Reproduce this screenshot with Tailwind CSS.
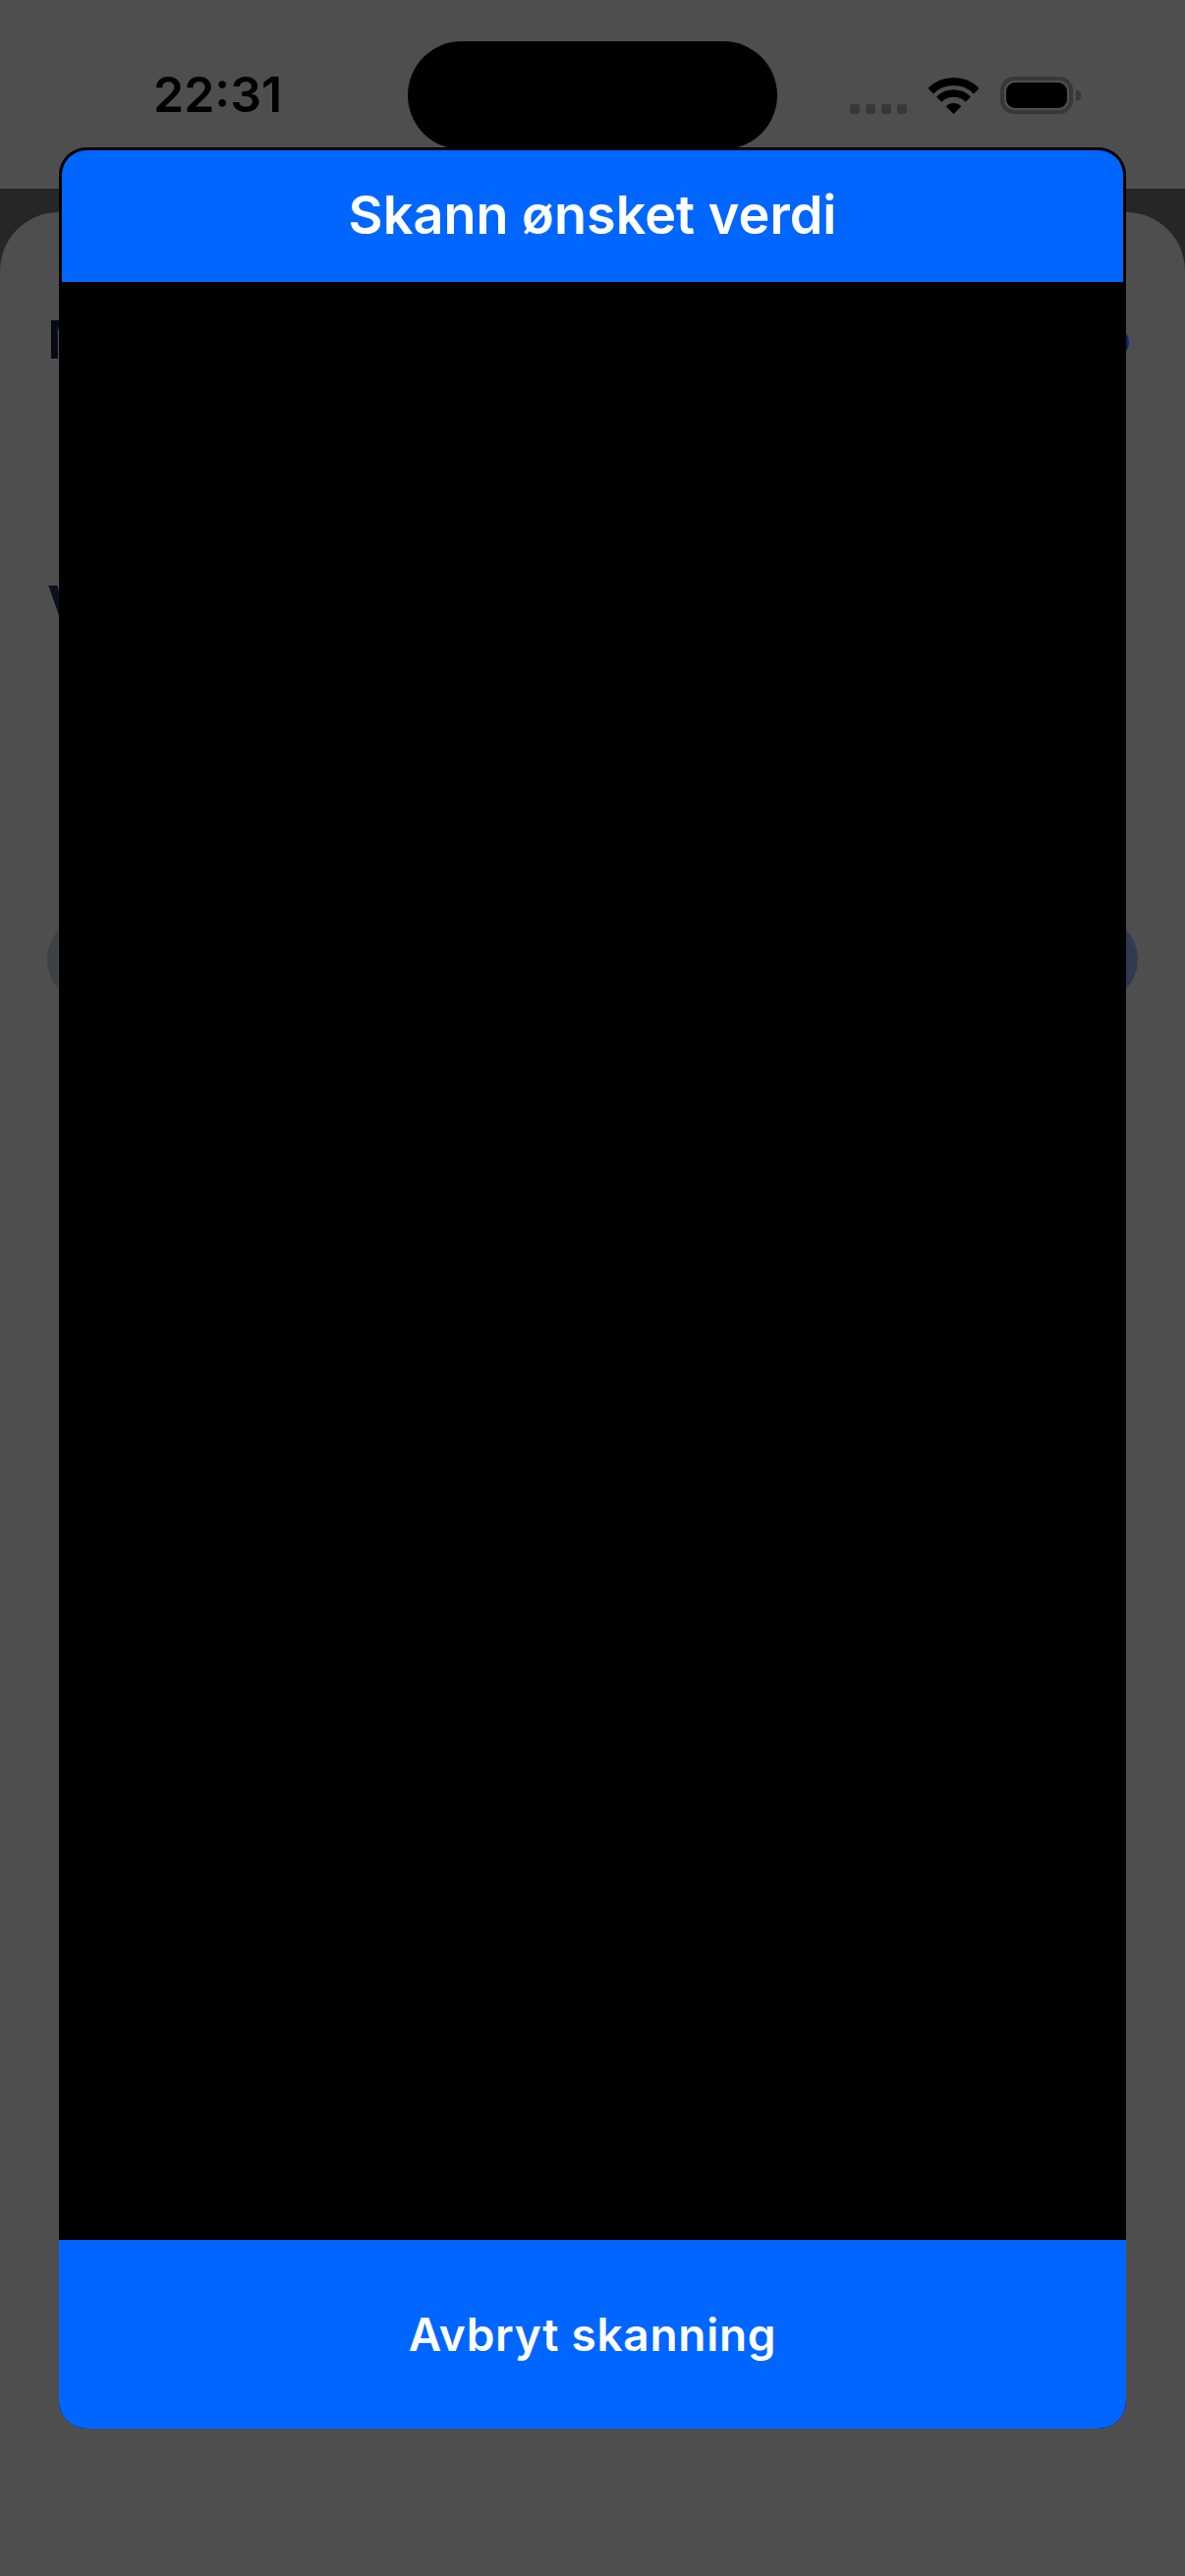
<!DOCTYPE html>
<html lang="no">
<head>
    <meta charset="UTF-8">
    <meta name="viewport" content="width=device-width, initial-scale=1.0">
    <title>Skann ønsket verdi</title>
    <script src="https://cdn.jsdelivr.net/npm/@tailwindcss/browser@4"></script>
</head>
<body class="bg-[#262626] font-['Inter',sans-serif]">
    <div class="relative w-[1206px] h-[2622px] overflow-hidden flex flex-col">
        <!-- Status bar -->
        <div class="h-[192px] shrink-0 bg-[#4e4e4e] flex items-start pl-[156px]">
            <span class="w-[259px] mt-[67px] text-[50px] leading-[58px] font-semibold text-black">22:31</span>
            <div class="w-[376px] h-[110px] mt-[42px] rounded-[55px] bg-black"></div>
            <div class="ml-[74px] mt-[106px] flex gap-[6px]">
                <div class="w-[10px] h-[10px] rounded-[3px] bg-[#383838]"></div>
                <div class="w-[10px] h-[10px] rounded-[3px] bg-[#383838]"></div>
                <div class="w-[10px] h-[10px] rounded-[3px] bg-[#383838]"></div>
                <div class="w-[10px] h-[10px] rounded-[3px] bg-[#383838]"></div>
            </div>
            <svg class="ml-[22px] mt-[79px]" width="51" height="37" viewBox="0 0 51 37" fill="none">
                <path d="M2.2 13.7A33 33 0 0 1 48.8 13.7" stroke="#000" stroke-width="8"/>
                <path d="M10.6 22.1A21 21 0 0 1 40.4 22.1" stroke="#000" stroke-width="7.5"/>
                <path d="M25.5 37L17.7 29.2A11 11 0 0 1 33.3 29.2Z" fill="#000"/>
            </svg>
            <div class="ml-[22px] mt-[78px] w-[74px] h-[38px] rounded-[14px] border-[4px] border-[#383838] p-[2px]">
                <div class="w-full h-full rounded-[9px] bg-black"></div>
            </div>
            <div class="ml-[3px] mt-[92px] w-[5px] h-[11px] rounded-r-full bg-[#383838]"></div>
        </div>

        <!-- Dimmed page behind the modal -->
        <div class="flex-1 mt-[24px] rounded-t-[60px] bg-[#4e4e4e] px-[48px] pt-[106px]">
            <div class="flex justify-between items-center h-[48px]">
                <span class="text-[54px] leading-[48px] font-semibold text-[#050a14]">M</span>
                <div class="w-[31px] h-[31px] mt-[4px] mr-[9px] rounded-full bg-[#002a6e]"></div>
            </div>
            <div class="mt-[222px] text-[54px] leading-[48px] font-bold text-[#0a1020]">V</div>
            <div class="mt-[293px] flex gap-[24px]">
                <div class="flex-1 h-[87px] rounded-[44px] bg-[#3e4145]"></div>
                <div class="flex-1 h-[87px] rounded-[44px] bg-[#303a50]"></div>
            </div>
        </div>

        <!-- Scanner modal -->
        <div class="absolute left-[60px] top-[150px] w-[1086px] h-[2322px] rounded-[28px] overflow-hidden bg-black flex flex-col">
            <div class="h-[134px] mx-[3px] mt-[3px] pb-[3px] rounded-t-[25px] bg-[#0066ff] flex items-center justify-center">
                <h1 class="text-[54px] font-semibold text-white">Skann ønsket verdi</h1>
            </div>
            <div class="flex-1 bg-black"></div>
            <div class="h-[192px] bg-[#0066ff] flex items-center justify-center">
                <span class="text-[46px] font-semibold tracking-[0.7px] text-white">Avbryt skanning</span>
            </div>
        </div>
    </div>
</body>
</html>
